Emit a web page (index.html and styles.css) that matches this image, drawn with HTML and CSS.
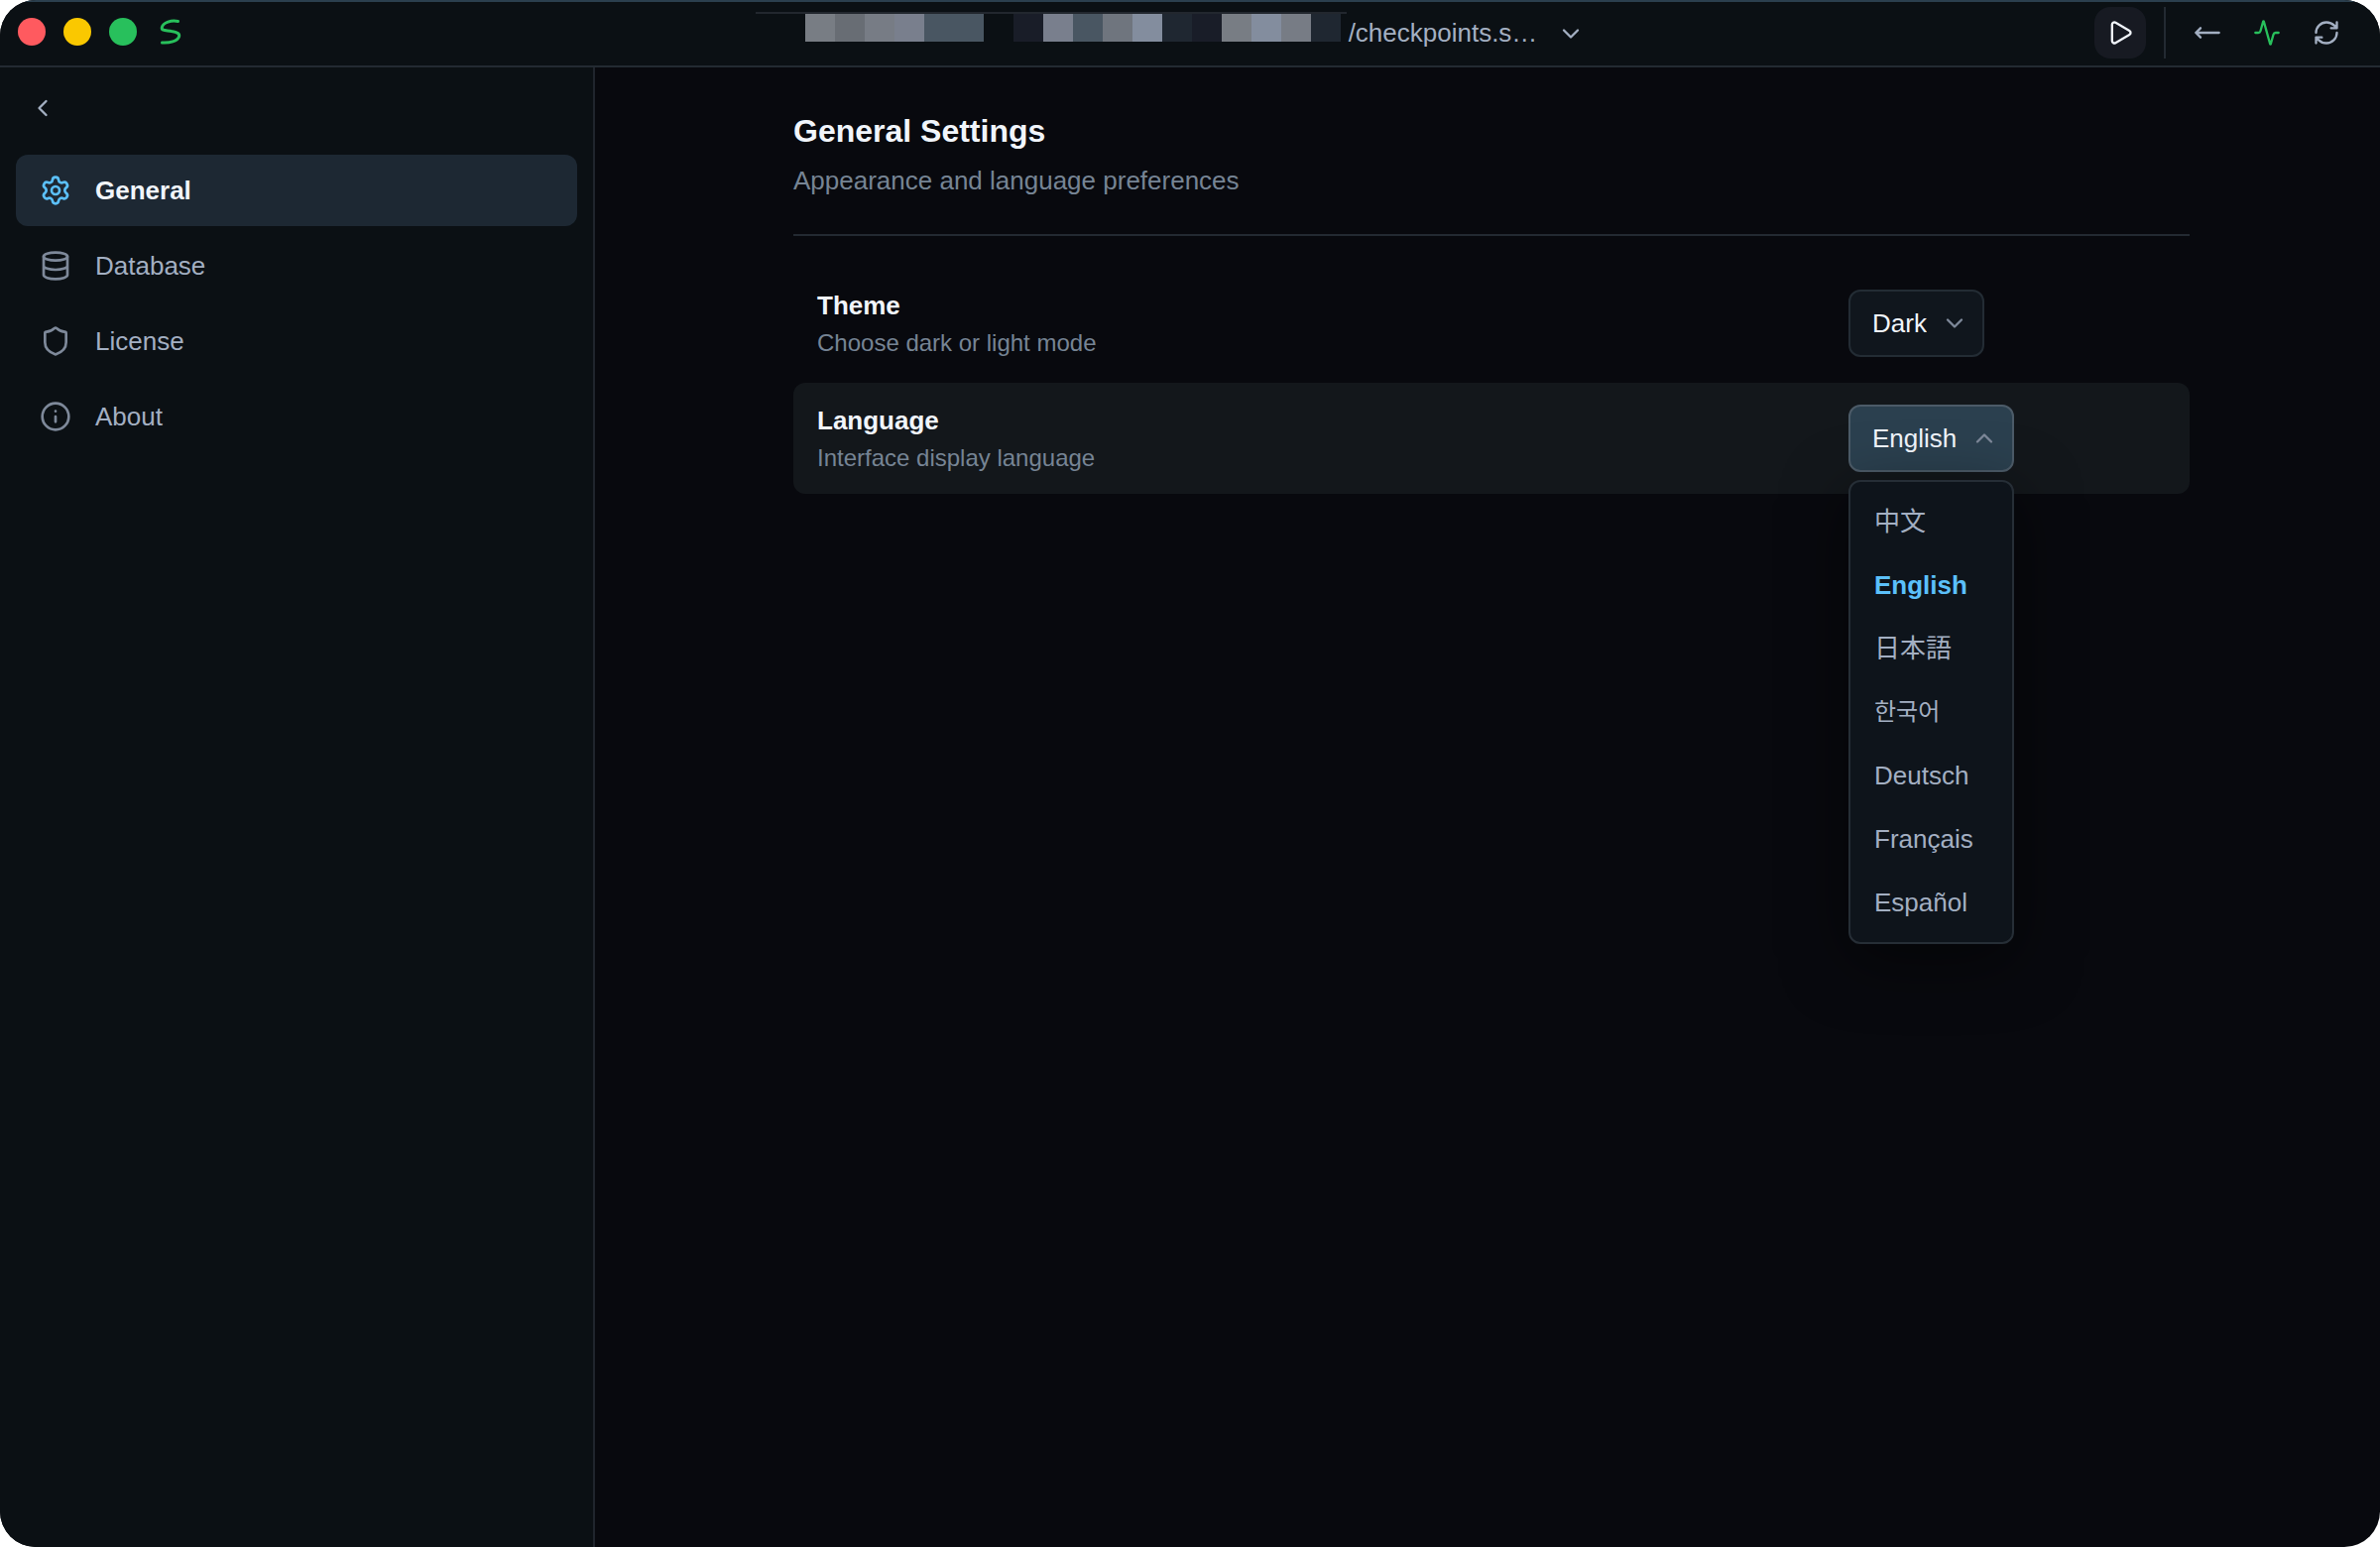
FILE: index.html
```html
<!DOCTYPE html>
<html lang="en">
<head>
<meta charset="utf-8">
<title>General Settings</title>
<link rel="stylesheet" href="styles.css">
</head>
<body>
<div class="window">
  <header class="titlebar">
    <div class="titlebar-left">
      <button class="light light-close" aria-label="Close"></button>
      <button class="light light-minimize" aria-label="Minimize"></button>
      <button class="light light-zoom" aria-label="Zoom"></button>
      <svg class="logo" viewBox="0 0 24 28" aria-hidden="true"><path d="M19.500 3.500C13 2 4.500 4.500 3.300 9.500C2.500 13.500 8 12.500 13 13.500C19 14.500 21.500 16 20.500 19C19 23.500 11 25.500 3.500 25"/></svg>
    </div>
    <button class="path" aria-label="Open database">
      <span class="mosaic" aria-hidden="true">
        <i class="tile t1"></i><i class="tile t2"></i><i class="tile t3"></i><i class="tile t4"></i><i class="tile t5"></i><i class="tile t5"></i>
        <i class="tile"></i><i class="tile t6"></i><i class="tile t4"></i><i class="tile t5"></i><i class="tile t7"></i><i class="tile t8"></i>
        <i class="tile t9"></i><i class="tile t6"></i><i class="tile t1"></i><i class="tile t8"></i><i class="tile t3"></i><i class="tile t9"></i>
      </span>
      <span class="path-text">/checkpoints.s…</span>
      <svg class="icon" viewBox="0 0 24 24"><path d="m6 9 6 6 6-6"/></svg>
    </button>
    <div class="titlebar-right">
      <button class="tool tool-run" aria-label="Run"><svg class="icon" viewBox="0 0 24 24"><path d="M5 5a2 2 0 0 1 3.008-1.728l11.997 6.998a2 2 0 0 1 .003 3.458l-12 7A2 2 0 0 1 5 19z"/></svg></button>
      <span class="divider"></span>
      <button class="tool" aria-label="Back"><svg class="icon" viewBox="0 0 24 24"><path d="M6 8l-4 4 4 4M2 12h20"/></svg></button>
      <button class="tool tool-live" aria-label="Activity"><svg class="icon" viewBox="0 0 24 24"><path d="M22 12h-2.480a2 2 0 0 0-1.930 1.460l-2.350 8.360a.25.25 0 0 1-.48 0L9.240 2.180a.25.25 0 0 0-.48 0l-2.350 8.360A2 2 0 0 1 4.490 12H2"/></svg></button>
      <button class="tool" aria-label="Refresh"><svg class="icon" viewBox="0 0 24 24"><path d="M3 12a9 9 0 0 1 9-9 9.750 9.750 0 0 1 6.740 2.740L21 8M21 3v5h-5M21 12a9 9 0 0 1-9 9 9.750 9.750 0 0 1-6.740-2.740L3 16M8 16H3v5"/></svg></button>
    </div>
  </header>
  <div class="body">
    <aside class="sidebar">
      <button class="back" aria-label="Back"><svg class="icon" viewBox="0 0 24 24"><path d="m15 18-6-6 6-6"/></svg></button>
      <nav class="nav">
        <a class="nav-item nav-active" href="#general"><svg class="icon icon-nav" viewBox="0 0 24 24"><path d="M9.671 4.136a2.340 2.340 0 0 1 4.659 0 2.340 2.340 0 0 0 3.319 1.915 2.340 2.340 0 0 1 2.330 4.033 2.340 2.340 0 0 0 0 3.831 2.340 2.340 0 0 1-2.330 4.033 2.340 2.340 0 0 0-3.319 1.915 2.340 2.340 0 0 1-4.659 0 2.340 2.340 0 0 0-3.320-1.915 2.340 2.340 0 0 1-2.330-4.033 2.340 2.340 0 0 0 0-3.831A2.340 2.340 0 0 1 6.350 6.051a2.340 2.340 0 0 0 3.319-1.915"/><circle cx="12" cy="12" r="3"/></svg>General</a>
        <a class="nav-item" href="#database"><svg class="icon icon-nav" viewBox="0 0 24 24"><ellipse cx="12" cy="5" rx="9" ry="3"/><path d="M3 5v14a9 3 0 0 0 18 0V5M3 12a9 3 0 0 0 18 0"/></svg>Database</a>
        <a class="nav-item" href="#license"><svg class="icon icon-nav" viewBox="0 0 24 24"><path d="M20 13c0 5-3.500 7.500-7.660 8.950a1 1 0 0 1-.67-.01C7.500 20.500 4 18 4 13V6a1 1 0 0 1 1-1c2 0 4.500-1.200 6.240-2.720a1.170 1.170 0 0 1 1.520 0C14.510 3.810 17 5 19 5a1 1 0 0 1 1 1z"/></svg>License</a>
        <a class="nav-item" href="#about"><svg class="icon icon-nav" viewBox="0 0 24 24"><circle cx="12" cy="12" r="10"/><path d="M12 16v-4M12 8h.01"/></svg>About</a>
      </nav>
    </aside>
    <main class="main">
      <div class="content">
        <div class="heading">
          <h1 class="title">General Settings</h1>
          <p class="subtitle">Appearance and language preferences</p>
        </div>
        <div class="rows">
          <div class="row">
            <div class="row-text">
              <label class="row-label" for="theme">Theme</label>
              <p class="row-help">Choose dark or light mode</p>
            </div>
            <div class="control">
              <div class="picker">
                <select class="select" id="theme"><option>Dark</option><option>Light</option></select>
                <svg class="icon chevron" viewBox="0 0 24 24"><path d="m6 9 6 6 6-6"/></svg>
              </div>
            </div>
          </div>
          <div class="row row-hover">
            <div class="row-text">
              <label class="row-label" for="language">Language</label>
              <p class="row-help">Interface display language</p>
            </div>
            <div class="control">
              <div class="picker">
                <select class="select select-open" id="language"><option>中文</option><option selected>English</option><option>日本語</option><option>한국어</option><option>Deutsch</option><option>Français</option><option>Español</option></select>
                <svg class="icon chevron" viewBox="0 0 24 24"><path d="m6 15 6-6 6 6"/></svg>
                <ul class="menu" role="listbox" aria-label="Language">
                  <li class="option" role="option" lang="zh">中文</li>
                  <li class="option option-selected" role="option" aria-selected="true">English</li>
                  <li class="option" role="option" lang="ja">日本語</li>
                  <li class="option" role="option" lang="ko">한국어</li>
                  <li class="option" role="option" lang="de">Deutsch</li>
                  <li class="option" role="option" lang="fr">Français</li>
                  <li class="option" role="option" lang="es">Español</li>
                </ul>
              </div>
            </div>
          </div>
        </div>
      </div>
    </main>
  </div>
</div>
</body>
</html>
```
FILE: styles.css
```css
* { box-sizing: border-box; }

body {
  margin: 0;
  background: #ffffff;
  color: #a3afc2;
  font: 26px/32px "Liberation Sans", "Noto Sans CJK SC", sans-serif;
}

button, select {
  margin: 0;
  padding: 0;
  border: 0;
  background: none;
  color: inherit;
  font: inherit;
}

h1, p, ul { margin: 0; padding: 0; }

.window {
  display: flex;
  flex-direction: column;
  min-height: 100vh;
  overflow: hidden;
  border-radius: 36px;
  background: #08090e;
}

.icon {
  flex: none;
  width: 28px;
  height: 28px;
  fill: none;
  stroke: currentColor;
  stroke-width: 2;
  stroke-linecap: round;
  stroke-linejoin: round;
}

/* Title bar */
.titlebar {
  display: grid;
  grid-template-columns: 1fr auto 1fr;
  align-items: center;
  height: 68px;
  border-top: 2px solid #2b3f4e;
  border-bottom: 2px solid #232a32;
  background: #0b1014;
}

.titlebar-left {
  display: flex;
  align-items: center;
  gap: 18px;
  padding: 0 0 4px 18px;
}

.light {
  width: 28px;
  height: 28px;
  border-radius: 50%;
}

.light-close { background: #ff5a5f; }
.light-minimize { background: #fac800; }
.light-zoom { background: #28c05c; }

.logo {
  width: 24px;
  height: 28px;
  margin-left: 4px;
  fill: none;
  stroke: #28c05c;
  stroke-width: 3;
  stroke-linecap: round;
}

.path {
  display: flex;
  align-items: center;
  align-self: stretch;
  padding-right: 40px;
}

.mosaic {
  display: flex;
  align-self: flex-start;
  margin-top: 10px;
  padding: 0 6px 0 50px;
  border-top: 2px solid #22272e;
}

.tile { width: 30px; height: 28px; }
.t1 { background: #787d84; }
.t2 { background: #686d74; }
.t3 { background: #777c85; }
.t4 { background: #797f8d; }
.t5 { background: #495662; }
.t6 { background: #191d28; }
.t7 { background: #6f757e; }
.t8 { background: #838d9e; }
.t9 { background: #1f2731; }

.path-text { padding: 0 20px 2px 2px; }

.titlebar-right {
  display: flex;
  align-items: center;
  justify-content: flex-end;
  gap: 8px;
  padding: 0 28px 2px 0;
}

.tool {
  display: flex;
  align-items: center;
  justify-content: center;
  width: 52px;
  height: 52px;
  border-radius: 16px;
}

.tool-run { margin-right: 10px; background: #171a22; color: #f1f5fb; }
.tool-live { color: #28c05c; }

.divider {
  width: 2px;
  height: 52px;
  margin-right: 8px;
  background: #232a32;
}

/* Sidebar */
.body { display: flex; flex: 1; }

.sidebar {
  flex: none;
  width: 600px;
  padding: 16px;
  border-right: 2px solid #20252d;
  background: #0b1014;
}

.back {
  display: flex;
  align-items: center;
  justify-content: center;
  width: 54px;
  height: 50px;
}

.nav {
  display: flex;
  flex-direction: column;
  gap: 4px;
  margin-top: 22px;
}

.nav-item {
  display: flex;
  align-items: center;
  gap: 24px;
  height: 72px;
  padding: 0 24px;
  border-radius: 12px;
  color: #a3afc2;
  text-decoration: none;
}

.icon-nav { width: 32px; height: 32px; color: #7e899a; }

.nav-active {
  background: #1d2833;
  color: #f1f5fb;
  font-weight: 700;
}

.nav-active .icon-nav { color: #5bc0fa; }

/* Settings */
.main { flex: 1; padding: 42px 0 42px 8px; }

.content { max-width: 1408px; margin: 0 auto; }

.heading {
  padding-bottom: 38px;
  border-bottom: 2px solid #232a32;
}

.title {
  color: #f1f5fb;
  font-size: 32px;
  line-height: 44px;
}

.subtitle { margin-top: 12px; color: #768494; line-height: 32px; }

.rows {
  display: flex;
  flex-direction: column;
  gap: 4px;
  margin-top: 32px;
}

.row {
  display: flex;
  align-items: center;
  justify-content: space-between;
  height: 112px;
  padding: 0 24px;
  border-radius: 12px;
}

.row-hover { background: #13171b; }

.row-label {
  display: block;
  color: #f1f5fb;
  font-weight: 700;
}

.row-help { margin-top: 8px; color: #768494; font-size: 24px; line-height: 28px; }

.control { width: 320px; }

.picker { position: relative; width: fit-content; }

.select {
  display: block;
  field-sizing: content;
  height: 68px;
  padding: 0 56px 0 22px;
  border: 2px solid #232c34;
  border-radius: 12px;
  background: #10161d;
  color: #f1f5fb;
  appearance: none;
}

.select-open { border-color: #4c5b68; background: #2b404f; }

.chevron {
  position: absolute;
  top: 20px;
  right: 16px;
  color: #7e899a;
  pointer-events: none;
}

.menu {
  position: absolute;
  top: 76px;
  left: 0;
  width: 100%;
  padding: 8px;
  border: 2px solid #262e36;
  border-radius: 12px;
  background: #0e141b;
  box-shadow: 0 16px 64px rgba(0, 0, 0, 0.5);
  list-style: none;
}

.option { height: 64px; padding: 0 16px; line-height: 64px; }
.option:lang(ja) { font-family: "Liberation Sans", "Noto Sans CJK JP", sans-serif; }
.option:lang(ko) { font-family: "Liberation Sans", "Noto Sans CJK KR", sans-serif; font-size: 24px; }
.option-selected { color: #5bc0fa; font-weight: 700; }
```
